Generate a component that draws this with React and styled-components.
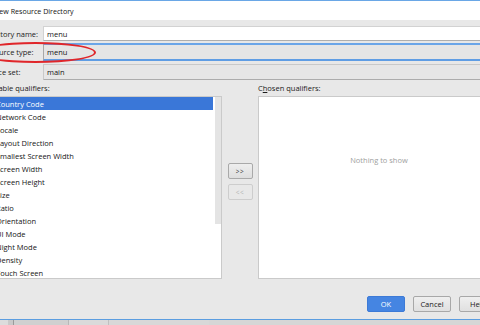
import React from 'react';
import styled, { createGlobalStyle } from 'styled-components';

const Global = createGlobalStyle`
  html, body { margin: 0; padding: 0; background: #d4d4d4; overflow: hidden; }
  body { font-family: "Open Sans", "Noto Sans", sans-serif; font-size: 7.5px; color: #151515; }
  * { box-sizing: border-box; }
`;

const Screen = styled.div`
  position: relative;
  width: 480px;
  height: 325px;
  overflow: hidden;
  display: flex;
  flex-direction: column;
`;

const Window = styled.div`
  display: flex;
  flex-direction: column;
  flex: none;
  width: 560px;
  height: 320px;
  margin-left: -30px;
  border-top: 1px solid #6aa7e6;
  border-bottom: 1px solid #5b9de0;
`;

const TitleBar = styled.div`
  height: 19px;
  flex: none;
  background: #ffffff;
  display: flex;
  align-items: center;
  padding-left: 24px;
  font-size: 7.1px;
  color: #111;
`;

const Body = styled.div`
  flex: 1;
  background: #e8e8e8;
  padding: 6px 0 0 2px;
  display: flex;
  flex-direction: column;
`;

const Form = styled.div`
  display: grid;
  grid-template-columns: 71px 1fr;
  grid-template-rows: 15px 18px 17px;
  row-gap: 2px;
`;

const Label = styled.div`
  display: flex;
  align-items: center;
  padding-left: 10px;
  color: #1c1c1c;
  white-space: nowrap;
`;

const Field = styled.div`
  display: flex;
  align-items: center;
  padding-left: 3px;
  color: #151515;
  ${({ $kind }) =>
    $kind === 'focus'
      ? `background:#e5e5e5; border-top:2px solid #6aa5e8; border-bottom:2px solid #5f9de4; border-left:1px solid #a8a8a8;`
      : $kind === 'disabled'
      ? `background:#e6e6e6; border:1px solid #c9c9c9; border-bottom-color:#acacac; border-radius:1px; margin-top:1px;`
      : `background:#ffffff; border:1px solid #d2d2d2; border-bottom-color:#aeaeae;`}
`;

const Qual = styled.div`
  display: grid;
  grid-template-columns: 250px 36px 241px;
  grid-template-rows: 16px 183px;
`;

const SectionLabel = styled.div`
  display: flex;
  align-items: center;
  padding-bottom: 1px;
  padding-left: ${({ $indent }) => ($indent ? '10px' : '0')};
  white-space: nowrap;
  color: #1c1c1c;
  u { text-decoration: underline; text-underline-offset: 1px; }
`;

const ListBox = styled.div`
  background: #ffffff;
  border: 1px solid #cacaca;
  display: flex;
  overflow: hidden;
`;

const Items = styled.div`
  flex: 1;
  display: flex;
  flex-direction: column;
`;

const Item = styled.div`
  height: 13px;
  flex: none;
  display: flex;
  align-items: center;
  padding-left: 23px;
  white-space: nowrap;
  color: ${({ $sel }) => ($sel ? '#ffffff' : '#151515')};
  background: ${({ $sel }) => ($sel ? '#3a77d8' : 'transparent')};
`;

const ScrollTrack = styled.div`
  width: 8px;
  flex: none;
  padding-left: 2px;
`;

const Thumb = styled.div`
  width: 6px;
  height: 127px;
  background: #e4e4e4;
`;

const MoveCol = styled.div`
  display: flex;
  flex-direction: column;
  align-items: center;
  justify-content: center;
  gap: 5px;
  padding-bottom: 12px;
`;

const SmallBtn = styled.div`
  width: 25px;
  height: 16px;
  display: flex;
  align-items: center;
  justify-content: center;
  border-radius: 2px;
  font-size: 6.5px;
  letter-spacing: 0.5px;
  border: 1px solid ${({ $off }) => ($off ? '#cdcdcd' : '#a9a9a9')};
  color: ${({ $off }) => ($off ? '#b4b4b4' : '#333')};
  background: ${({ $off }) => ($off ? '#e8e8e8' : 'linear-gradient(#eeeeee, #dedede)')};
`;

const ChosenBox = styled.div`
  background: #ffffff;
  border: 1px solid #cacaca;
  border-right: none;
  display: flex;
  justify-content: center;
  padding-top: 58px;
  color: #a0a0a0;
`;

const Footer = styled.div`
  display: flex;
  justify-content: flex-end;
  gap: 8px;
  padding: 17px 33px 0 0;
`;

const DlgBtn = styled.div`
  width: 38px;
  height: 16px;
  display: flex;
  align-items: center;
  justify-content: center;
  border-radius: 2px;
  border: 1px solid ${({ $primary }) => ($primary ? '#3d7ad6' : '#a8a8a8')};
  background: ${({ $primary }) => ($primary ? '#4585e2' : 'linear-gradient(#efefef, #e0e0e0)')};
  color: ${({ $primary }) => ($primary ? '#ffffff' : '#222')};
`;

const Taskbar = styled.div`
  flex: 1;
  display: flex;
  background: #d6d6d6;
`;

const TaskSeg = styled.div`
  width: ${({ $w }) => $w}px;
  flex: none;
  background: ${({ $bg }) => $bg};
  border-right: 1px solid ${({ $line }) => $line || 'transparent'};
`;

const Ellipse = styled.div`
  position: absolute;
  left: -25px;
  top: 42px;
  width: 121px;
  height: 21px;
  border: 2px solid #e0262a;
  border-radius: 50%;
  pointer-events: none;
`;

const qualifiers = [
  'Country Code',
  'Network Code',
  'Locale',
  'Layout Direction',
  'Smallest Screen Width',
  'Screen Width',
  'Screen Height',
  'Size',
  'Ratio',
  'Orientation',
  'UI Mode',
  'Night Mode',
  'Density',
  'Touch Screen',
];

export default function App() {
  return (
    <Screen>
      <Global />
      <Window>
        <TitleBar>New Resource Directory</TitleBar>
        <Body>
          <Form>
            <Label>Directory name:</Label>
            <Field>menu</Field>
            <Label>Resource type:</Label>
            <Field $kind="focus">menu</Field>
            <Label>Source set:</Label>
            <Field $kind="disabled">main</Field>
          </Form>
          <Qual>
            <SectionLabel $indent>Available qualifiers:</SectionLabel>
            <div />
            <SectionLabel>
              C<u>h</u>osen qualifiers:
            </SectionLabel>
            <ListBox>
              <Items>
                {qualifiers.map((q, i) => (
                  <Item key={q} $sel={i === 0}>
                    {q}
                  </Item>
                ))}
              </Items>
              <ScrollTrack>
                <Thumb />
              </ScrollTrack>
            </ListBox>
            <MoveCol>
              <SmallBtn>&gt;&gt;</SmallBtn>
              <SmallBtn $off>&lt;&lt;</SmallBtn>
            </MoveCol>
            <ChosenBox>Nothing to show</ChosenBox>
          </Qual>
          <Footer>
            <DlgBtn $primary>OK</DlgBtn>
            <DlgBtn>Cancel</DlgBtn>
            <DlgBtn>Help</DlgBtn>
          </Footer>
        </Body>
      </Window>
      <Taskbar>
        <TaskSeg $w={8} $bg="#dcdcdc" />
        <TaskSeg $w={6} $bg="#c9c9c9" $line="#9a9a9a" />
        <TaskSeg $w={55} $bg="#d0d0d0" $line="#b8b8b8" />
        <TaskSeg $w={40} $bg="#dadada" $line="#c0c0c0" />
        <TaskSeg $w={100} $bg="#d8d8d8" />
      </Taskbar>
      <Ellipse />
    </Screen>
  );
}
